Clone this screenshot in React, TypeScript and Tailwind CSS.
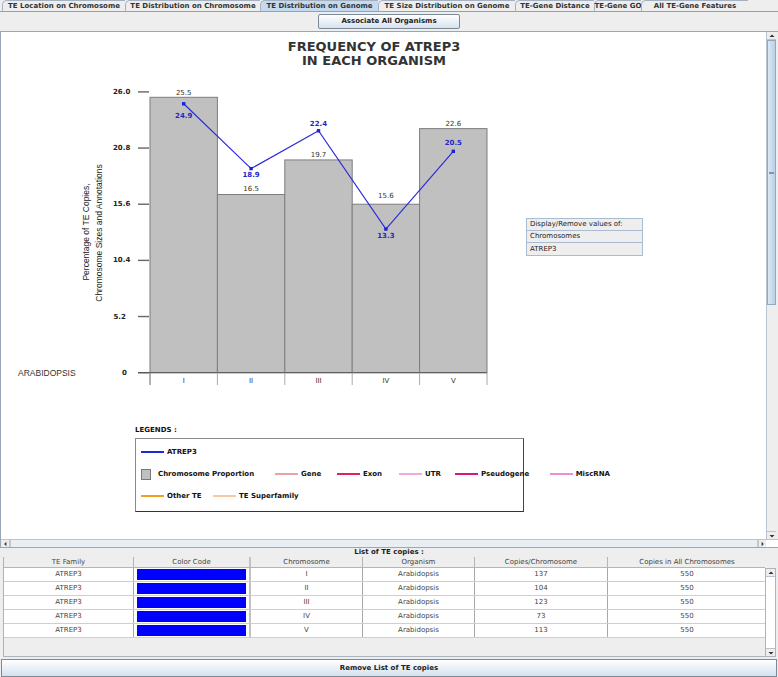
import React from "react";

const tabs = [
  { label: "TE Location on Chromosome", w: "w-[123px]" },
  { label: "TE Distribution on Chromosome", w: "w-[135px]" },
  { label: "TE Distribution on Genome", w: "w-[118px]", active: true },
  { label: "TE Size Distribution on Genome", w: "w-[137px]" },
  { label: "TE-Gene Distance", w: "w-[79px]" },
  { label: "TE-Gene GO", w: "w-[47px]" },
  { label: "All TE-Gene Features", w: "w-[107px]" },
];

// chart scale: 0 sits at y=372.7, 10.8px per percent
const Y0 = 372.7;
const K = 10.8;
const yv = (v: number) => Y0 - v * K;
const BX = 150;
const BW = 67.4;

const chroms = [
  { name: "I", bar: 25.5, line: 24.9, barLbl: 93.3, lineLbl: 116 },
  { name: "II", bar: 16.5, line: 18.9, barLbl: 189.3, lineLbl: 174.5 },
  { name: "III", bar: 19.7, line: 22.4, barLbl: 155.3, lineLbl: 124.3 },
  { name: "IV", bar: 15.6, line: 13.3, barLbl: 195.7, lineLbl: 236 },
  { name: "V", bar: 22.6, line: 20.5, barLbl: 124, lineLbl: 143.3 },
];

const ticks = [
  { label: "26.0", v: 26, x: 113 },
  { label: "20.8", v: 20.8, x: 113 },
  { label: "15.6", v: 15.6, x: 113 },
  { label: "10.4", v: 10.4, x: 113 },
  { label: "5.2", v: 5.2, x: 113.5 },
  { label: "0", v: 0, x: 122 },
];

const rows = [
  { chr: "I", copies: 137 },
  { chr: "II", copies: 104 },
  { chr: "III", copies: 123 },
  { chr: "IV", copies: 73 },
  { chr: "V", copies: 113 },
];

const cols = "grid grid-cols-[130px_117px_112px_112px_133px_158px]";

function Arrow({ dir }: { dir: "up" | "down" | "left" | "right" }) {
  const pts = {
    up: "1.5,5 4,2.5 6.5,5",
    down: "1.5,3 4,5.5 6.5,3",
    left: "5,1.5 2.5,4 5,6.5",
    right: "3,1.5 5.5,4 3,6.5",
  }[dir];
  return (
    <svg width="8" height="8" viewBox="0 0 8 8">
      <polygon points={pts} fill="#333" />
    </svg>
  );
}

function TabBar() {
  return (
    <div className="h-[12px] flex items-end pl-[2px] border-b border-[#8ea3b8]">
      {tabs.map((t) => (
        <div
          key={t.label}
          className={`${t.w} h-[11px] shrink-0 flex items-center justify-center whitespace-nowrap text-[7px] leading-none font-bold text-[#333] border-t border-l border-[#a3b1c0] rounded-tl-[5px] ${
            t.active ? "bg-[#c5d9ef]" : "bg-[#eeeeee]"
          }`}
        >
          {t.label}
        </div>
      ))}
    </div>
  );
}

function Chart() {
  const pts = chroms.map((c, i) => [BX + BW * i + BW / 2, yv(c.line)]);
  return (
    <svg width="520" height="356" viewBox="1 32 520 356" className="shrink-0">
      <text x="374" y="46.5" textAnchor="middle" dominantBaseline="central" fontSize="13" fontWeight="bold" fill="#333" fontFamily="DejaVu Sans">
        FREQUENCY OF ATREP3
      </text>
      <text x="374" y="60.5" textAnchor="middle" dominantBaseline="central" fontSize="13" fontWeight="bold" fill="#333" fontFamily="DejaVu Sans">
        IN EACH ORGANISM
      </text>

      {ticks.map((t) => (
        <g key={t.label}>
          <text x={t.x} y={yv(t.v)} dominantBaseline="central" fontSize="7" fontWeight="bold" fill="#222" fontFamily="DejaVu Sans">
            {t.label}
          </text>
          <line x1="138" x2="149" y1={yv(t.v)} y2={yv(t.v)} stroke="#666" strokeWidth="1.4" />
        </g>
      ))}

      <g transform="translate(86 232) rotate(-90)">
        <text textAnchor="middle" dy="0.35em" fontSize="8.5" fill="#222" fontFamily="Liberation Sans">
          Percentage of TE Copies,
        </text>
      </g>
      <g transform="translate(99 233) rotate(-90)">
        <text textAnchor="middle" dy="0.35em" fontSize="8.5" fill="#222" fontFamily="Liberation Sans">
          Chromosome Sizes and Annotations
        </text>
      </g>

      <text x="18" y="373" dominantBaseline="central" fontSize="8.5" fill="#333" fontFamily="Liberation Sans">
        ARABIDOPSIS
      </text>

      {chroms.map((c, i) => (
        <rect
          key={c.name}
          x={BX + BW * i}
          y={yv(c.bar)}
          width={BW}
          height={Y0 - yv(c.bar)}
          fill="#c0c0c0"
          stroke="#7d7d7d"
          strokeWidth="1"
        />
      ))}

      <line x1="138" x2="487" y1={Y0} y2={Y0} stroke="#555" strokeWidth="1" />
      {[0, 1, 2, 3, 4, 5].map((i) => (
        <line key={i} x1={BX + BW * i} x2={BX + BW * i} y1={Y0} y2="385" stroke={i === 0 ? "#666" : "#aaa"} strokeWidth="1" />
      ))}
      {chroms.map((c, i) => (
        <text key={c.name} x={BX + BW * i + BW / 2} y="380.5" textAnchor="middle" dominantBaseline="central" fontSize="7" fill="#333" fontFamily="DejaVu Sans">
          {c.name}
        </text>
      ))}

      {chroms.map((c, i) => (
        <text key={c.name} x={BX + BW * i + BW / 2} y={c.barLbl} textAnchor="middle" dominantBaseline="central" fontSize="7" fill="#333" fontFamily="DejaVu Sans">
          {c.bar.toFixed(1)}
        </text>
      ))}

      <polyline points={pts.map((p) => p.join(",")).join(" ")} fill="none" stroke="#2a2adb" strokeWidth="1.2" />
      {pts.map(([x, y], i) => (
        <rect key={i} x={x - 1.7} y={y - 1.7} width="3.4" height="3.4" fill="#1f1fd6" />
      ))}
      {chroms.map((c, i) => (
        <text key={c.name} x={BX + BW * i + BW / 2} y={c.lineLbl} textAnchor="middle" dominantBaseline="central" fontSize="7" fontWeight="bold" fill="#2626c8" fontFamily="DejaVu Sans">
          {c.line.toFixed(1)}
        </text>
      ))}
    </svg>
  );
}

function DisplayBox() {
  const items = ["Display/Remove values of:", "Chromosomes", "ATREP3"];
  return (
    <div className="ml-[5px] mt-[186px] w-[117px] h-fit border border-[#a9bcd1] bg-[#eeeeee] text-[7px] leading-none text-[#222]">
      {items.map((it, i) => (
        <div key={it} className={`h-[12px] flex items-center pl-[3px] ${i < 2 ? "border-b border-[#a9bcd1]" : ""}`}>
          {it}
        </div>
      ))}
    </div>
  );
}

function LineKey({ color, label, w }: { color: string; label: string; w: string }) {
  return (
    <div className={`${w} flex items-center shrink-0`}>
      <div className={`w-[23px] h-[2px] ${color}`} />
      <span className="ml-[3px]">{label}</span>
    </div>
  );
}

function Legend() {
  return (
    <div className="ml-[134px]">
      <div className="mt-[37px] h-[10px] flex items-center text-[7px] leading-none font-bold text-[#111]">LEGENDS :</div>
      <div className="mt-[3px] w-[389px] h-[74px] bg-white border border-[#8a8a8a] border-b-[#333] border-r-[#444] pt-[2px] pl-[5px] text-[7px] leading-none font-bold text-[#111]">
        <div className="h-[22px] flex items-center">
          <LineKey color="bg-[#1e2ad8]" label="ATREP3" w="w-[80px]" />
        </div>
        <div className="h-[22px] flex items-center">
          <div className="w-[134px] flex items-center shrink-0">
            <div className="w-[10px] h-[11px] bg-[#c0c0c0] border border-[#777]" />
            <span className="ml-[7px]">Chromosome Proportion</span>
          </div>
          <LineKey color="bg-[#e8a3a3]" label="Gene" w="w-[62px]" />
          <LineKey color="bg-[#e0245a]" label="Exon" w="w-[62px]" />
          <LineKey color="bg-[#f4aad8]" label="UTR" w="w-[56px]" />
          <LineKey color="bg-[#d6187a]" label="Pseudogene" w="w-[95px]" />
          <LineKey color="bg-[#f08ed2]" label="MiscRNA" w="w-[60px]" />
        </div>
        <div className="h-[22px] flex items-center">
          <LineKey color="bg-[#f0a020]" label="Other TE" w="w-[72px]" />
          <LineKey color="bg-[#f8c99e]" label="TE Superfamily" w="w-[100px]" />
        </div>
      </div>
    </div>
  );
}

function VScroll() {
  return (
    <div className="w-[10px] flex flex-col bg-[#eeeeee] border-l border-[#b8c4d0]">
      <div className="h-[8px] flex items-center justify-center border-b border-[#b8c4d0]">
        <Arrow dir="up" />
      </div>
      <div className="h-[265px] bg-linear-to-r from-[#dce8f5] to-[#b9cfe6] border border-[#8fa8c4] flex items-center justify-center">
        <div className="w-[5px] h-[2px] border-t border-b border-[#7f95ad]" />
      </div>
      <div className="flex-1" />
      <div className="h-[8px] flex items-center justify-center border-t border-[#b8c4d0]">
        <Arrow dir="down" />
      </div>
    </div>
  );
}

function HScroll() {
  return (
    <div className="h-[8px] flex border-t border-[#b8c4d0]">
      <div className="flex-1 flex bg-[#eeeeee] ml-[1px]">
        <div className="w-[8px] flex items-center justify-center border-r border-[#b8c4d0]">
          <Arrow dir="left" />
        </div>
        <div className="flex-1 bg-[#e9eef3] border-x border-[#c3ccd6]" />
        <div className="w-[8px] flex items-center justify-center border-l border-[#b8c4d0]">
          <Arrow dir="right" />
        </div>
      </div>
      <div className="w-[12px] bg-white" />
    </div>
  );
}

function ChartPanel() {
  return (
    <div className="h-[517px] flex flex-col border-t border-b border-l border-[#99a8b8]">
      <div className="flex-1 flex min-h-0">
        <div className="w-[765px] bg-white flex flex-col">
          <div className="flex">
            <Chart />
            <DisplayBox />
          </div>
          <Legend />
        </div>
        <VScroll />
        <div className="w-[2px]" />
      </div>
      <HScroll />
    </div>
  );
}

function CopiesTable() {
  return (
    <div className="h-[102px] flex pl-[3px] pr-[2px] pb-[2px]">
      <div className="w-[762px] flex flex-col border-l border-b border-[#a9b4c0] text-[7px] leading-none text-[#444]">
        <div className={`${cols} h-[11px] bg-[#eeeeee] border-b border-[#b5b5b5]`}>
          {["TE Family", "Color Code", "Chromosome", "Organism", "Copies/Chromosome", "Copies in All Chromosomes"].map((h, i) => (
            <div
              key={h}
              className={`flex items-center justify-center ${i === 1 ? "border-r-2 border-[#c2c2c2]" : i < 5 ? "border-r border-[#b5b5b5]" : ""}`}
            >
              {h}
            </div>
          ))}
        </div>
        {rows.map((r) => (
          <div key={r.chr} className={`${cols} h-[14px] bg-white border-b border-[#cfcfcf]`}>
            <div className="flex items-center justify-center border-r border-[#a8a8a8]">ATREP3</div>
            <div className="px-[3px] py-[1px] border-r-2 border-[#c2c2c2]">
              <div className="w-full h-full bg-[#0000ff]" />
            </div>
            <div className="flex items-center justify-center border-r border-[#a8a8a8]">{r.chr}</div>
            <div className="flex items-center justify-center border-r border-[#a8a8a8]">Arabidopsis</div>
            <div className="flex items-center justify-center border-r border-[#a8a8a8]">{r.copies}</div>
            <div className="flex items-center justify-center">550</div>
          </div>
        ))}
        <div className="flex-1 bg-[#eeeeee]" />
      </div>
      <div className="w-[11px] flex flex-col">
        <div className="h-[11px]" />
        <div className="h-[89px] bg-white border border-[#a9b4c0] flex flex-col justify-between">
          <div className="h-[8px] flex items-center justify-center bg-[#eeeeee] border-b border-[#b8c4d0]">
            <Arrow dir="up" />
          </div>
          <div className="h-[8px] flex items-center justify-center bg-[#eeeeee] border-t border-[#b8c4d0]">
            <Arrow dir="down" />
          </div>
        </div>
      </div>
    </div>
  );
}

export default function App() {
  return (
    <div className="w-[778px] h-[677px] bg-[#eeeeee] flex flex-col overflow-hidden font-['DejaVu_Sans',sans-serif] text-[#333]">
      <TabBar />
      <div className="h-[19px] flex items-center justify-center">
        <button
          type="button"
          className="w-[142px] h-[15px] flex items-center justify-center rounded-[2px] border border-[#7a8a99] bg-linear-to-b from-white to-[#d6e2ef] text-[7px] leading-none font-bold text-[#222]"
        >
          Associate All Organisms
        </button>
      </div>
      <ChartPanel />
      <div className="h-[9px] flex items-center justify-center text-[7px] leading-none font-bold text-[#222]">
        List of TE copies :
      </div>
      <CopiesTable />
      <button
        type="button"
        className="h-[18px] mx-[1px] flex items-center justify-center border border-[#7a8a99] bg-linear-to-b from-white to-[#d4e1ee] text-[7px] leading-none font-bold text-[#222]"
      >
        Remove List of TE copies
      </button>
    </div>
  );
}
